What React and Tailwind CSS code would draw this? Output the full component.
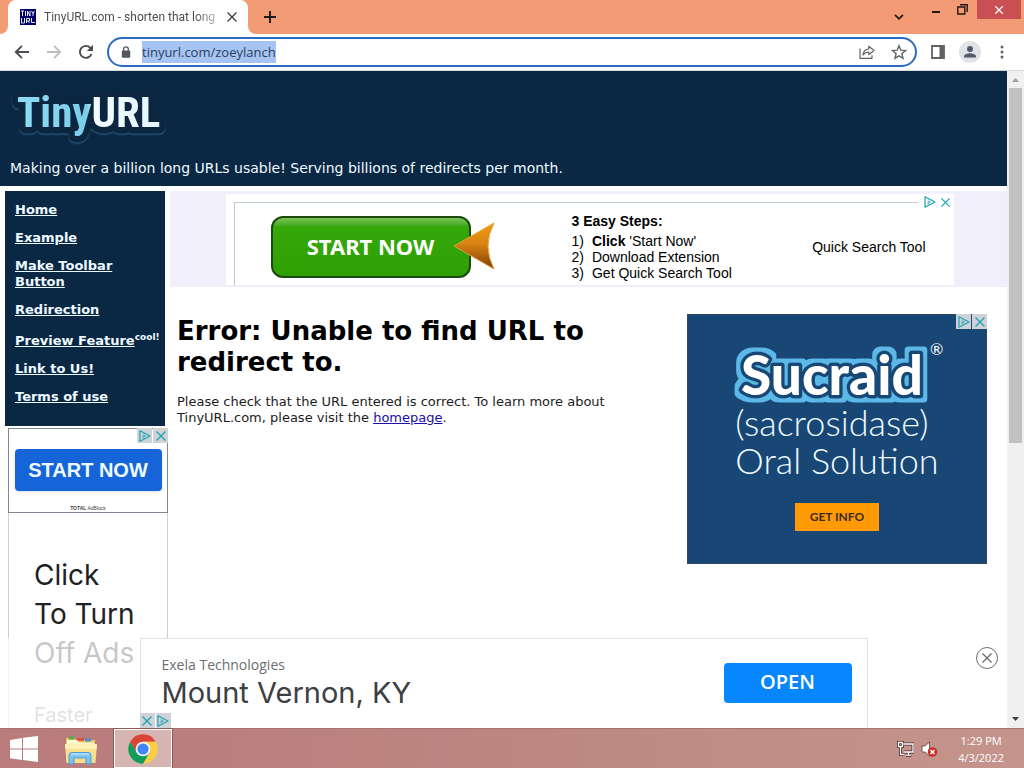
import React from "react";

const NAV_LINKS = [
  { label: "Home" },
  { label: "Example" },
  { label: "Make Toolbar Button" },
  { label: "Redirection" },
  { label: "Preview Feature", note: "cool!" },
  { label: "Link to Us!" },
  { label: "Terms of use" },
];

const STEPS = [
  <>
    <b>Click</b> 'Start Now'
  </>,
  "Download Extension",
  "Get Quick Search Tool",
];

const CloseX = ({ className }) => (
  <svg viewBox="0 0 12 12" className={className} aria-hidden="true">
    <path d="M1.5 1.5l9 9M10.5 1.5l-9 9" fill="none" stroke="currentColor" strokeWidth="1.4" />
  </svg>
);

const AdTriangle = ({ className }) => (
  <svg viewBox="0 0 12 12" className={className} aria-hidden="true">
    <path d="M1 .8v10.4L11 6z" fill="none" stroke="currentColor" strokeWidth="1.2" strokeLinejoin="round" />
    <path d="M4.2 3.6v.9M4.2 5.4v3M5.8 4.8v2.4" stroke="currentColor" strokeWidth="1" />
  </svg>
);

//the "ad choices" and close buttons in the corner of an ad
const AdCorner = ({ reverse }) => (
  <div className={`flex gap-px text-[#1fa3b4] ${reverse ? "flex-row-reverse" : ""}`}>
    <button aria-label="Ad choices" className="flex size-[15px] items-center justify-center bg-[#cfd3d8]">
      <AdTriangle className="size-3" />
    </button>
    <button aria-label="Close ad" className="flex size-[15px] items-center justify-center bg-[#cfd3d8]">
      <CloseX className="size-3" />
    </button>
  </div>
);

const Favicon = () => (
  <svg viewBox="0 0 16 16" className="size-4 shrink-0" aria-hidden="true">
    <rect width="16" height="16" fill="#00006b" />
    <path
      d="M1 2h3M2.5 2v5M5.5 2v5M7.5 7V2l2.5 5V2M11.5 2l1.5 2.5L14.5 2M13 4.5V7M1.5 9v5h3V9M6.5 14V9.5h3V12h-3M8 12l1.5 2M11.5 9v4.5H15"
      fill="none"
      stroke="#fff"
      strokeWidth=".9"
    />
  </svg>
);

const TabStrip = () => (
  <div className="flex h-[34px] shrink-0 bg-[#f29b75]">
    <div className="relative ml-2 flex w-60 items-center rounded-t-lg bg-white pl-3">
      <svg viewBox="0 0 8 8" className="absolute -left-2 bottom-0 size-2" aria-hidden="true">
        <path d="M8 0v8H0a8 8 0 0 0 8-8" fill="#fff" />
      </svg>
      <svg viewBox="0 0 8 8" className="absolute -right-2 bottom-0 size-2" aria-hidden="true">
        <path d="M0 0v8h8a8 8 0 0 1-8-8" fill="#fff" />
      </svg>
      <Favicon />
      <div className="ml-2 w-[176px] bg-linear-to-r from-[#45494d] from-85% to-[#d0d0d0] bg-clip-text font-[Roboto,sans-serif] text-xs whitespace-nowrap text-transparent">
        TinyURL.com - shorten that long
      </div>
      <button aria-label="Close tab" className="ml-1 flex size-4 items-center justify-center text-[#3c4043]">
        <CloseX className="size-3" />
      </button>
    </div>
    <button aria-label="New tab" className="ml-2 flex w-7 items-center justify-center text-[#1b1b1b]">
      <svg viewBox="0 0 12 12" className="size-3" aria-hidden="true">
        <path d="M6 0v12M0 6h12" stroke="currentColor" strokeWidth="1.9" />
      </svg>
    </button>
    <div className="ml-auto flex items-start text-[#241712]">
      <button aria-label="Search tabs" className="mr-3 flex h-[34px] w-7 items-center justify-center">
        <svg viewBox="0 0 10 6" className="h-1.5 w-2.5" aria-hidden="true">
          <path d="M1 .8l4 4 4-4" fill="none" stroke="currentColor" strokeWidth="1.7" />
        </svg>
      </button>
      <button aria-label="Minimize" className="flex h-[19px] w-[22px] items-center justify-center pt-1">
        <span className="h-0.5 w-2 bg-[#241712]" />
      </button>
      <button aria-label="Restore" className="flex h-[19px] w-[30px] items-center justify-center">
        <svg viewBox="0 0 11 11" className="size-[11px]" aria-hidden="true">
          <path d="M.8 3h7v7h-7zM3 .8h7.2V8" fill="none" stroke="currentColor" strokeWidth="1.4" />
        </svg>
      </button>
      <button aria-label="Close window" className="mr-[3px] flex h-[19px] w-11 items-center justify-center bg-[#c85052] text-white">
        <CloseX className="size-2.5" />
      </button>
    </div>
  </div>
);

const ToolButton = ({ label, className = "text-[#5f6368]", children }) => (
  <button aria-label={label} className={`flex size-8 shrink-0 items-center justify-center ${className}`}>
    {children}
  </button>
);

const Toolbar = () => (
  <div className="flex h-[37px] shrink-0 items-center border-b border-[#d8dadd] bg-white px-1.5">
    <ToolButton label="Back" className="text-[#4a4d51]">
      <svg viewBox="0 0 16 16" className="size-4" aria-hidden="true">
        <path d="M15 8H2.5M8 1.8L1.8 8 8 14.2" fill="none" stroke="currentColor" strokeWidth="1.9" />
      </svg>
    </ToolButton>
    <ToolButton label="Forward" className="text-[#bcbec0]">
      <svg viewBox="0 0 16 16" className="size-4" aria-hidden="true">
        <path d="M1 8h12.5M8 1.8L14.2 8 8 14.2" fill="none" stroke="currentColor" strokeWidth="1.9" />
      </svg>
    </ToolButton>
    <ToolButton label="Reload" className="text-[#4a4d51]">
      <svg viewBox="0 0 16 16" className="size-4" aria-hidden="true">
        <path d="M13.5 10A6 6 0 1 1 12.4 3.9L14 5.5" fill="none" stroke="currentColor" strokeWidth="1.9" />
        <path d="M15 .8V7H8.8z" fill="currentColor" />
      </svg>
    </ToolButton>
    <div className="mx-[5px] flex h-[30px] flex-1 items-center rounded-full border-2 border-[#2f6ac4] bg-white pl-3">
      <svg viewBox="0 0 10 12" className="mr-[11px] h-3 w-2.5 text-[#54585c]" aria-hidden="true">
        <path d="M2.7 5V3.2a2.3 2.3 0 0 1 4.6 0V5" fill="none" stroke="currentColor" strokeWidth="1.3" />
        <rect x=".8" y="4.5" width="8.4" height="7.2" rx="1" fill="currentColor" />
      </svg>
      <input
        type="text"
        aria-label="Address bar"
        defaultValue="tinyurl.com/zoeylanch"
        className="field-sizing-content h-[22px] bg-[#a5c4f4] font-['Open_Sans','Noto_Sans',sans-serif] text-[13px] text-[#2c3e58] outline-none"
      />
      <div className="ml-auto flex">
        <ToolButton label="Share">
          <svg viewBox="0 0 16 16" className="size-4" aria-hidden="true">
            <path
              d="M1 4.5v9.8h12v-3M4 11c.3-3.6 2.4-5.8 5.8-6V2.2L15 6.5l-5.2 4.2V8C7.2 8 5.5 9 4 11z"
              fill="none"
              stroke="currentColor"
              strokeWidth="1.2"
              strokeLinejoin="round"
            />
          </svg>
        </ToolButton>
        <ToolButton label="Bookmark">
          <svg viewBox="0 0 16 16" className="size-4" aria-hidden="true">
            <path
              d="M8 1.8l1.8 4.4 4.7.4-3.6 3.1 1.1 4.6L8 11.8l-4 2.5 1.1-4.6-3.6-3.1 4.7-.4z"
              fill="none"
              stroke="currentColor"
              strokeWidth="1.4"
            />
          </svg>
        </ToolButton>
      </div>
    </div>
    <ToolButton label="Side panel">
      <svg viewBox="0 0 14 14" className="size-3.5" aria-hidden="true">
        <path d="M1 1h12v12H1z" fill="none" stroke="currentColor" strokeWidth="1.8" />
        <path d="M8.5 1H13v12H8.5z" fill="currentColor" />
      </svg>
    </ToolButton>
    <ToolButton label="Profile">
      <svg viewBox="0 0 22 22" className="size-[22px]" aria-hidden="true">
        <circle cx="11" cy="11" r="11" fill="#dfe2e7" />
        <circle cx="11" cy="8" r="3" fill="#4f5b6b" />
        <path d="M5 16.5v-1.3c0-2 4-3 6-3s6 1 6 3v1.3z" fill="#4f5b6b" />
      </svg>
    </ToolButton>
    <ToolButton label="Menu">
      <svg viewBox="0 0 4 14" className="h-3.5 w-1" aria-hidden="true">
        <g fill="currentColor">
          <circle cx="2" cy="2" r="1.5" />
          <circle cx="2" cy="7" r="1.5" />
          <circle cx="2" cy="12" r="1.5" />
        </g>
      </svg>
    </ToolButton>
  </div>
);

const Logo = () => (
  <svg viewBox="0 0 160 68" className="h-[68px] w-40 overflow-visible" role="img" aria-label="TinyURL">
    <defs>
      <linearGradient id="logoFill" x1="0" y1="0" x2="1" y2="0">
        <stop offset="0" stopColor="#8edcf3" />
        <stop offset=".49" stopColor="#7bcdea" />
        <stop offset=".53" stopColor="#f4fcff" />
        <stop offset="1" stopColor="#e2f5fd" />
      </linearGradient>
      <filter id="rim" x="-10%" y="-20%" width="120%" height="150%">
        <feDropShadow dx="0" dy="1.5" stdDeviation=".5" floodColor="#24506e" />
      </filter>
    </defs>
    <text
      x="7"
      y="48"
      fontSize="43"
      fill="url(#logoFill)"
      stroke="#0a2540"
      strokeWidth="13"
      strokeLinejoin="round"
      filter="url(#rim)"
      className="font-['Roboto_Condensed',Roboto,sans-serif] font-bold [paint-order:stroke]"
    >
      TinyURL
    </text>
  </svg>
);

const SideNav = () => (
  <nav className="flex flex-col gap-3 bg-[#0a2744] px-2.5 pt-[11px] pb-[21px] text-[13px] leading-4 font-bold text-[#eefaff]">
    {NAV_LINKS.map((link) => (
      <div key={link.label} className={link.note ? "flex items-start pt-[3px] whitespace-nowrap" : ""}>
        <a href="#" className="underline">
          {link.label}
        </a>
        {link.note && <span className="-mt-1 text-[9px]">{link.note}</span>}
      </div>
    ))}
  </nav>
);

const SkyscraperAd = () => (
  <div className="ml-[3px] w-40 border border-[#cfcfcf] pb-10 font-['Liberation_Sans',sans-serif]">
    <div className="relative -mx-px -mt-px flex flex-col items-center border border-[#7f8894] pt-5">
      <div className="absolute -top-px -right-px">
        <AdCorner />
      </div>
      <button className="h-[42px] w-[147px] rounded bg-[#1565d8] text-xl leading-5 font-bold text-[#eefaff] shadow-sm">
        START NOW
      </button>
      <div className="mt-3.5 text-[5px] leading-[7px] text-[#444]">
        <b>TOTAL</b> AdBlock
      </div>
    </div>
    <div className="pt-[43px] pl-[25px] font-[Inter,sans-serif] text-[28px] leading-[39px] whitespace-nowrap text-[#202124]">
      <p>Click</p>
      <p>To Turn</p>
      <p>Off Ads</p>
      <p className="mt-6 text-xl leading-9 text-[#8a8d91]">Faster</p>
    </div>
  </div>
);

const LeaderboardAd = () => (
  <div className="flex justify-center bg-[#f0effb] pt-[3px] pb-0.5 pl-0.5">
    <div className="w-[728px] bg-white pt-2 pl-2 font-['Liberation_Sans',sans-serif] text-sm leading-4 text-black">
      <div className="relative flex border-t border-l border-[#bfcdcd] pt-[13px] pb-1">
        <div className="absolute -top-[9px] right-0 flex bg-white pl-1 text-[#1fa3b4]">
          <button aria-label="Ad choices" className="flex size-4 items-center justify-center">
            <AdTriangle className="size-3" />
          </button>
          <button aria-label="Close ad" className="flex size-4 items-center justify-center">
            <CloseX className="size-[11px]" />
          </button>
        </div>
        <div className="relative ml-9">
          <button className="h-[62px] w-[200px] rounded-xl border-2 border-[#1c4a0c] bg-linear-to-b from-[#7cc257] via-[#35a808] via-15% to-[#2fa004] pb-0.5 font-['Noto_Sans',sans-serif] text-[22px] font-bold text-white">
            START NOW
          </button>
          <svg viewBox="0 0 42 48" className="absolute top-1.5 -right-6 h-12 w-[42px]" aria-hidden="true">
            <defs>
              <linearGradient id="pointer" x1="0" y1="0" x2="0" y2="1">
                <stop offset="0" stopColor="#f29a12" />
                <stop offset=".45" stopColor="#d98311" />
                <stop offset="1" stopColor="#7d3c0c" />
              </linearGradient>
            </defs>
            <path d="M1 24L41 1q-12 23 0 46z" fill="url(#pointer)" stroke="#e2a23a" />
          </svg>
        </div>
        <div className="-mt-2.5 ml-[101px] pt-[7px]">
          <p className="mb-1 font-bold">3 Easy Steps:</p>
          <ol>
            {STEPS.map((step, i) => (
              <li key={i} className="flex gap-2">
                <span>{i + 1})</span>
                <span>{step}</span>
              </li>
            ))}
          </ol>
        </div>
        <p className="mr-7 ml-auto self-center pb-1">Quick Search Tool</p>
      </div>
    </div>
  </div>
);

const SucraidAd = () => (
  <div className="relative flex h-[250px] w-[300px] shrink-0 flex-col items-center border border-[#30485f] bg-[#194775] pt-[22px] text-[#eefaff]">
    <div className="absolute -top-px -right-px">
      <AdCorner />
    </div>
    <svg viewBox="0 0 220 68" className="h-[68px] w-[220px] overflow-visible" role="img" aria-label="Sucraid">
      <defs>
        <filter id="halo" x="-10%" y="-20%" width="120%" height="140%">
          <feMorphology in="SourceAlpha" operator="dilate" radius="4" result="grown" />
          <feFlood floodColor="#5bb8e6" />
          <feComposite in2="grown" operator="in" result="edge" />
          <feMerge>
            <feMergeNode in="edge" />
            <feMergeNode in="SourceGraphic" />
          </feMerge>
        </filter>
      </defs>
      <text
        x="14"
        y="58"
        fontSize="55"
        fill="#fff"
        stroke="#194775"
        strokeWidth="7"
        strokeLinejoin="round"
        filter="url(#halo)"
        className="font-[Lato,sans-serif] font-black [paint-order:stroke]"
      >
        Sucraid
      </text>
      <text x="203" y="18" fill="#fff" className="font-[Lato,sans-serif]" fontSize="16">
        ®
      </text>
    </svg>
    <div className="-mt-0.5 font-[Lato,sans-serif] text-[36px] leading-[38px] font-light whitespace-nowrap">
      <p>(sacrosidase)</p>
      <p className="text-center">Oral Solution</p>
    </div>
    <button className="mt-6 h-7 w-21 bg-[#ff9a05] font-[Lato,sans-serif] text-xs font-bold text-[#3d2b1c]">
      GET INFO
    </button>
  </div>
);

//sticks to the bottom of the page, over the content
const AnchorAd = () => (
  <div className="absolute inset-x-0 bottom-0 flex h-[90px] justify-center bg-white/75">
    <div className="relative flex w-[728px] items-center justify-between border border-b-0 border-[#e2e2e2] bg-white pr-[15px] pb-px pl-[21px]">
      <div className="whitespace-nowrap">
        <p className="font-['Open_Sans',sans-serif] text-sm leading-5 text-[#6b6e72]">Exela Technologies</p>
        <p className="font-[Inter,sans-serif] text-[29px] leading-9 text-[#3c4043]">Mount Vernon, KY</p>
      </div>
      <button className="h-10 w-32 rounded-sm bg-[#0787ff] pb-0.5 font-['Open_Sans',sans-serif] text-xl font-semibold text-white">
        OPEN
      </button>
      <div className="absolute bottom-0 -left-px">
        <AdCorner reverse />
      </div>
    </div>
    <button
      aria-label="Dismiss ad"
      className="absolute top-[9px] right-[9px] flex size-[22px] items-center justify-center rounded-full border border-[#6c6c6c] bg-white text-[#6c6c6c]"
    >
      <CloseX className="size-3" />
    </button>
  </div>
);

const Scrollbar = () => (
  <div className="flex w-[17px] shrink-0 flex-col items-center bg-[#f0f0f0]">
    <svg viewBox="0 0 17 17" className="size-[17px] shrink-0" aria-hidden="true">
      <path d="M5 11l3.5-4L12 11z" fill="#a0a0a0" />
    </svg>
    <div className="h-[54%] w-[13px] bg-[#c1c1c1]" />
    <svg viewBox="0 0 17 17" className="mt-auto size-[17px] shrink-0" aria-hidden="true">
      <path d="M5 6l3.5 4L12 6z" fill="#404040" />
    </svg>
  </div>
);

const Page = () => (
  <div className="relative min-w-0 flex-1 overflow-hidden bg-white font-['DejaVu_Sans',sans-serif]">
    <header className="bg-[#0a2744] pt-2 pb-[7px] pl-2.5 text-[#eefaff]">
      <Logo />
      <p className="mt-[11px] text-sm leading-[21px]">
        Making over a billion long URLs usable! Serving billions of redirects per month.
      </p>
    </header>
    <div className="flex gap-[5px] pt-[5px] pl-[5px]">
      <div className="flex w-40 shrink-0 flex-col gap-0.5">
        <SideNav />
        <SkyscraperAd />
      </div>
      <main className="min-w-0 flex-1">
        <LeaderboardAd />
        <div className="flex items-start justify-between gap-3 pt-[27px] pr-5 pl-[7px]">
          <div className="pt-0.5">
            <h1 className="text-[26px] leading-[31px] font-bold text-black">
              Error: Unable to find URL to redirect to.
            </h1>
            <p className="mt-4 text-[13px] leading-4 text-[#1c1c1c]">
              Please check that the URL entered is correct. To learn more about TinyURL.com, please visit the{" "}
              <a href="#" className="text-[#1a0dab] underline">
                homepage
              </a>
              .
            </p>
          </div>
          <SucraidAd />
        </div>
      </main>
    </div>
    <AnchorAd />
  </div>
);

const WindowsIcon = () => (
  <svg viewBox="0 0 28 26" className="h-[26px] w-7" aria-hidden="true">
    <path d="M0 4l12-2v10.5H0zM13 1.8L28 0v12.5H13zM0 13.5h12V24L0 22.2zM13 13.5h15V26l-15-1.9z" fill="#fff" />
  </svg>
);

const FolderIcon = () => (
  <svg viewBox="0 0 34 30" className="h-[30px] w-[34px]" aria-hidden="true">
    <path d="M2 3h8l2 2h19v21H2z" fill="#e9c768" />
    <path d="M5 1.5h5v3H5z" fill="#4fae50" />
    <path d="M13 3h7v3h-7z" fill="#d9543c" />
    <path d="M21 3.5h6v3h-6z" fill="#4b8fd0" />
    <path d="M3 5h10l2 2.5h15V10H3z" fill="#fff6d0" />
    <path d="M1 9h32l-1.5 19H2.5z" fill="#f8e08e" />
    <path d="M1 9h32l-.4 5H1.4z" fill="#fdf0b5" />
    <path d="M5 29v-8.5q0-3 3-3h16q3 0 3 3V29h-5v-6H10v6z" fill="#7cc4ee" stroke="#4a9bd4" />
    <path d="M7 20q0-1 1.5-1h15q1.5 0 1.5 1" fill="none" stroke="#d6f0fc" />
  </svg>
);

const ChromeIcon = () => (
  <svg viewBox="0 0 24 24" className="size-8" aria-hidden="true">
    <path d="M2.47 6.5A11 11 0 0 1 21.53 6.5H12L7.24 14.75z" fill="#db4437" />
    <path d="M21.53 6.5A11 11 0 0 1 12 23L16.76 14.75 12 6.5z" fill="#ffcd40" />
    <path d="M12 23A11 11 0 0 1 2.47 6.5L7.24 14.75h9.52z" fill="#0f9d58" />
    <circle cx="12" cy="12" r="5.5" fill="#f5f5f5" />
    <circle cx="12" cy="12" r="4.2" fill="#4285f4" />
  </svg>
);

const Taskbar = () => (
  <div className="flex h-10 shrink-0 items-stretch border-t border-[#a87270] bg-linear-to-r from-[#b97b7b] via-[#bd8681] via-50% to-[#c4958c] text-white">
    <button aria-label="Start" className="flex w-12 items-center justify-center">
      <WindowsIcon />
    </button>
    <button aria-label="File Explorer" className="flex w-[66px] items-center justify-center pt-0.5">
      <FolderIcon />
    </button>
    <button
      aria-label="Google Chrome"
      className="flex w-[58px] items-center justify-center border border-white bg-[#d6b4b2] outline outline-[#8a5a58]"
    >
      <ChromeIcon />
    </button>
    <div className="ml-auto flex items-center pr-5">
      <svg viewBox="0 0 17 16" className="h-4 w-[17px]" aria-hidden="true">
        <path
          d="M6.5 3H16v8H7M9 14.2h5.5M11.5 11v3M1.5 1.5h4v4h-4zM3.5 5.5v8H7"
          fill="none"
          stroke="#4c2d2a"
          strokeWidth="3"
        />
        <path
          d="M6.5 3H16v8H7M9 14.2h5.5M11.5 11v3M1.5 1.5h4v4h-4zM3.5 5.5v8H7"
          fill="none"
          stroke="#fff"
          strokeWidth="1.3"
        />
      </svg>
      <svg viewBox="0 0 17 16" className="ml-[7px] h-4 w-[17px]" aria-hidden="true">
        <path d="M1 5h3l4.5-4v14L4 11H1z" fill="#fff" stroke="#5d3a37" strokeWidth=".8" />
        <circle cx="11.5" cy="11" r="4.8" fill="#c9302c" />
        <path d="M9.5 9l4 4M13.5 9l-4 4" stroke="#fff" strokeWidth="1.5" />
      </svg>
      <div className="ml-5 text-center font-['Open_Sans','Noto_Sans',sans-serif] text-[11px] leading-[17px]">
        <p>1:29 PM</p>
        <p>4/3/2022</p>
      </div>
    </div>
  </div>
);

const App = () => {
  return (
    <div className="flex h-screen flex-col overflow-hidden">
      <TabStrip />
      <Toolbar />
      <div className="flex min-h-0 flex-1">
        <Page />
        <Scrollbar />
      </div>
      <Taskbar />
    </div>
  );
};

export default App;
